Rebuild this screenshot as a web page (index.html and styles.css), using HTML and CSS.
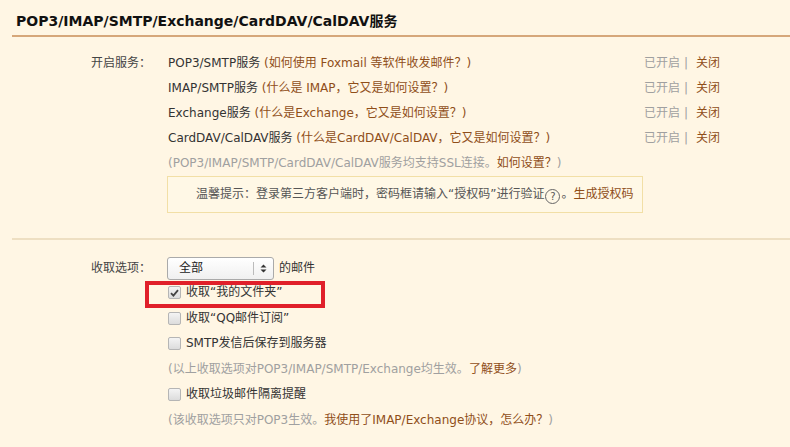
FILE: index.html
```html
<!DOCTYPE html>
<html lang="zh-CN">
<head>
<meta charset="utf-8">
<title>POP3/IMAP/SMTP/Exchange/CardDAV/CalDAV服务</title>
<link rel="stylesheet" href="styles.css">
</head>
<body>
<div class="page">
  <h2 class="title">POP3/IMAP/SMTP/Exchange/CardDAV/CalDAV服务</h2>

  <div class="section first">
    <div class="label">开启服务：</div>
    <div class="content">
      <div class="svc">
        <div class="desc">POP3/SMTP服务 <a class="lnk">(如何使用 Foxmail 等软件收发邮件？)</a></div>
        <div class="status"><span class="on">已开启</span><span class="sep">|</span><a class="lnk">关闭</a></div>
      </div>
      <div class="svc">
        <div class="desc">IMAP/SMTP服务 <a class="lnk">(什么是 IMAP，它又是如何设置？)</a></div>
        <div class="status"><span class="on">已开启</span><span class="sep">|</span><a class="lnk">关闭</a></div>
      </div>
      <div class="svc">
        <div class="desc">Exchange服务 <a class="lnk">(什么是Exchange，它又是如何设置？)</a></div>
        <div class="status"><span class="on">已开启</span><span class="sep">|</span><a class="lnk">关闭</a></div>
      </div>
      <div class="svc">
        <div class="desc">CardDAV/CalDAV服务 <a class="lnk">(什么是CardDAV/CalDAV，它又是如何设置？)</a></div>
        <div class="status"><span class="on">已开启</span><span class="sep">|</span><a class="lnk">关闭</a></div>
      </div>
      <div class="note">(POP3/IMAP/SMTP/CardDAV/CalDAV服务均支持SSL连接。<a class="lnk">如何设置？</a>)</div>
      <div class="tip">温馨提示：登录第三方客户端时，密码框请输入“授权码”进行验证<span class="qmark">?</span>。<a class="lnk">生成授权码</a></div>
    </div>
  </div>

  <div class="section second">
    <div class="label">收取选项：</div>
    <div class="content">
      <div class="selrow">
        <div class="select"><span class="selval">全部</span><span class="selarrow"><svg width="7" height="9" viewBox="0 0 7 9"><path d="M3.5 0.5 L6.5 3.5 H0.5 Z M3.5 8.5 L0.5 5.5 H6.5 Z" fill="#333"/></svg></span></div>
        <span class="suffix">的邮件</span>
      </div>
      <div class="chk marked"><span class="box checked"><svg width="9" height="8" viewBox="0 0 9 8"><path d="M1 4.2 L3.4 6.6 L8 1.2" fill="none" stroke="#444" stroke-width="1.8"/></svg></span>收取“我的文件夹”<span class="redbox"></span></div>
      <div class="chk"><span class="box"></span>收取“QQ邮件订阅”</div>
      <div class="chk"><span class="box"></span>SMTP发信后保存到服务器</div>
      <div class="note row">(以上收取选项对POP3/IMAP/SMTP/Exchange均生效。<a class="lnk">了解更多</a>)</div>
      <div class="chk"><span class="box"></span>收取垃圾邮件隔离提醒</div>
      <div class="note row">(该收取选项只对POP3生效。<a class="lnk">我使用了IMAP/Exchange协议，怎么办？</a>)</div>
    </div>
  </div>
</div>
</body>
</html>
```

FILE: styles.css
```css
html, body {
  margin: 0;
  padding: 0;
  background: #fff6e4;
}
body {
  font-family: Verdana, "DejaVu Sans", "Noto Sans CJK SC", sans-serif;
  font-size: 12px;
  color: #333;
}
.page {
  padding-left: 12px;
  overflow: hidden;
  height: 447px;
}
.title {
  margin: 0;
  padding: 10px 0 0 4px;
  height: 25px;
  font-size: 14px;
  font-weight: bold;
  line-height: 22px;
  color: #111;
  border-bottom: 2px solid #d6a77a;
  white-space: nowrap;
}
.section {
  display: grid;
  grid-template-columns: 155px 1fr;
}
.section.first {
  padding-top: 14px;
  padding-bottom: 25px;
  border-bottom: 2px solid #eedfc2;
}
.section.second {
  padding-top: 16px;
}
.label {
  padding-left: 79px;
  line-height: 25px;
  color: #444;
  white-space: nowrap;
}
.section.second .label {
  line-height: 24px;
}
.content {
  line-height: 25px;
  white-space: nowrap;
}
.svc {
  display: grid;
  grid-template-columns: 476px auto;
  padding-left: 1px;
}
.lnk {
  color: #8f4e19;
  text-decoration: none;
}
.status {
  color: #999;
}
.on {
  color: #a0a0a0;
}
.sep {
  margin: 0 8px 0 4px;
  color: #a0a0a0;
}
.note {
  color: #a0a0a0;
  padding-left: 1px;
}
.note.row {
  height: 25.5px;
  line-height: 25.5px;
}
.tip {
  margin-top: 0;
  width: 474px;
  height: 35px;
  line-height: 35px;
  padding-left: 0;
  border: 1px solid #f2dfa6;
  background: #fff8e6;
  color: #555;
  text-indent: 28px;
  box-sizing: content-box;
}
.qmark {
  display: inline-block;
  width: 13px;
  height: 13px;
  border: 1px solid #666;
  border-radius: 50%;
  line-height: 13px;
  font-size: 10px;
  text-align: center;
  text-indent: 0;
  vertical-align: -2px;
  margin: 0 1px;
  color: #555;
}
.selrow {
  display: flex;
  align-items: center;
  height: 24px;
}
.select {
  display: flex;
  align-items: center;
  width: 105px;
  height: 21px;
  border: 1px solid #aaa;
  border-radius: 3px;
  background: linear-gradient(#ffffff, #f0f0f0);
  box-sizing: content-box;
}
.selval {
  flex: 1;
  padding-left: 11px;
  line-height: 21px;
  color: #222;
}
.selarrow {
  display: flex;
  align-items: center;
  justify-content: center;
  width: 19px;
  height: 13px;
  border-left: 1px solid #bbb;
}
.suffix {
  margin-left: 5px;
  color: #333;
}
.chk {
  position: relative;
  display: flex;
  align-items: center;
  padding-left: 1px;
  height: 25.5px;
  color: #333;
}
.box {
  display: inline-flex;
  align-items: center;
  justify-content: center;
  width: 11px;
  height: 11px;
  margin-right: 5px;
  border: 1px solid #b5b5b5;
  border-radius: 2px;
  background: linear-gradient(#f4f4f4, #dcdcdc);
}
.redbox {
  position: absolute;
  left: -22px;
  top: 1px;
  width: 172px;
  height: 19px;
  border: 4px solid #e0202a;
}
```
